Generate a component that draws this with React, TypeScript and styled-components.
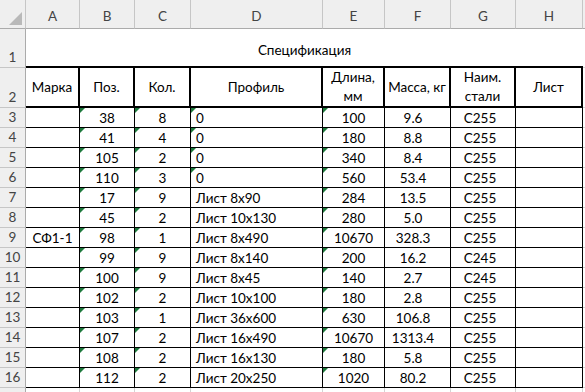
import styled, { createGlobalStyle, css } from 'styled-components'

const GlobalStyle = createGlobalStyle`
  html, body {
    margin: 0;
    padding: 0;
    background: #fff;
    overflow: hidden;
  }
`

const GRID_LINE = '#d4d4d4'
const HEAD_BG = '#efefef'
const HEAD_LINE = '#c6c6c6'

const Sheet = styled.div`
  display: grid;
  grid-template-columns: 26px 54px 55px 56px 132px 62px 66px 65px 67px 80px;
  grid-template-rows: 29px 39px 40px repeat(15, 20px);
  font-family: Lato, 'Liberation Sans', sans-serif;
  font-size: 13.5px;
  color: #000;
  width: 585px;
  height: 392px;
  overflow: hidden;
`

const Corner = styled.div`
  position: relative;
  background: ${HEAD_BG};
  border-right: 1px solid ${HEAD_LINE};
  border-bottom: 1px solid #ababab;
  box-sizing: border-box;

  &::after {
    content: '';
    position: absolute;
    right: 3px;
    bottom: 3px;
    width: 0;
    height: 0;
    border-left: 13px solid transparent;
    border-bottom: 13px solid #b9b9b9;
  }
`

const ColHead = styled.div`
  display: flex;
  align-items: flex-end;
  justify-content: center;
  padding-bottom: 4px;
  box-sizing: border-box;
  background: ${HEAD_BG};
  border-right: 1px solid ${HEAD_LINE};
  border-bottom: 1px solid #ababab;
  color: #444;
`

const RowHead = styled.div`
  display: flex;
  align-items: flex-end;
  justify-content: center;
  padding-bottom: 2px;
  box-sizing: border-box;
  background: ${HEAD_BG};
  border-right: 1px solid #ababab;
  border-bottom: 1px solid ${HEAD_LINE};
  color: #444;
`

const Title = styled.div`
  grid-column: 2 / 10;
  display: flex;
  align-items: center;
  justify-content: center;
  padding-top: 4px;
  box-sizing: border-box;
  border-bottom: 2px solid #000;
`

const Blank = styled.div`
  box-sizing: border-box;
  border-right: 1px solid ${GRID_LINE};
  border-bottom: 1px solid ${GRID_LINE};
`

const HeadCell = styled.div`
  display: flex;
  align-items: center;
  justify-content: center;
  text-align: center;
  line-height: 19px;
  box-sizing: border-box;
  border-right: 2px solid #000;
  border-bottom: 2px solid #000;
  white-space: pre-line;
`

const HeadText = styled.div`
  display: block;
`

const Cell = styled.div<{ $left?: boolean; $flag?: boolean; $shift?: number }>`
  position: relative;
  display: flex;
  align-items: center;
  justify-content: ${p => (p.$left ? 'flex-start' : 'center')};
  padding: 1px ${p => p.$shift ?? 0}px 0 ${p => (p.$left ? 5 : 0)}px;
  box-sizing: border-box;
  border-right: 1px solid #000;
  border-bottom: 1px solid #000;
  white-space: nowrap;

  ${p =>
    p.$flag &&
    css`
      &::before {
        content: '';
        position: absolute;
        top: 0;
        left: 0;
        border-top: 5px solid #1d7a3c;
        border-right: 5px solid transparent;
      }
    `}
`

const columns = ['A', 'B', 'C', 'D', 'E', 'F', 'G', 'H', '']

type Row = [string, string, string, string, string, string, string]

const rows: Row[] = [
  ['', '38', '8', '0', '100', '9.6', 'С255'],
  ['', '41', '4', '0', '180', '8.8', 'С255'],
  ['', '105', '2', '0', '340', '8.4', 'С255'],
  ['', '110', '3', '0', '560', '53.4', 'С255'],
  ['', '17', '9', 'Лист 8x90', '284', '13.5', 'С255'],
  ['', '45', '2', 'Лист 10x130', '280', '5.0', 'С255'],
  ['СФ1-1', '98', '1', 'Лист 8x490', '10670', '328.3', 'С255'],
  ['', '99', '9', 'Лист 8x140', '200', '16.2', 'С245'],
  ['', '100', '9', 'Лист 8x45', '140', '2.7', 'С245'],
  ['', '102', '2', 'Лист 10x100', '180', '2.8', 'С255'],
  ['', '103', '1', 'Лист 36x600', '630', '106.8', 'С255'],
  ['', '107', '2', 'Лист 16x490', '10670', '1313.4', 'С255'],
  ['', '108', '2', 'Лист 16x130', '180', '5.8', 'С255'],
  ['', '112', '2', 'Лист 20x250', '1020', '80.2', 'С255'],
]

const headers = ['Марка', 'Поз.', 'Кол.', 'Профиль', 'Длина,\nмм', 'Масса, кг', 'Наим.\nстали', 'Лист']

export default function App() {
  return (
    <>
      <GlobalStyle />
      <Sheet>
        <Corner />
        {columns.map((c, i) => (
          <ColHead key={i}>{c}</ColHead>
        ))}

        <RowHead>1</RowHead>
        <Title>Спецификация</Title>
        <Blank />

        <RowHead>2</RowHead>
        {headers.map((h, i) => (
          <HeadCell key={i}>
            <HeadText>{h}</HeadText>
          </HeadCell>
        ))}
        <Blank />

        {rows.map((r, i) => (
          <Row key={i} n={i + 3} row={r} zeroProfile={i < 4} />
        ))}

        <RowHead />
        {columns.map((_, i) => (
          <Blank key={i} />
        ))}
      </Sheet>
    </>
  )
}

function Row({ n, row, zeroProfile }: { n: number; row: Row; zeroProfile: boolean }) {
  const [mark, pos, qty, profile, length, mass, steel] = row
  return (
    <>
      <RowHead>{n}</RowHead>
      <Cell>{mark}</Cell>
      <Cell $flag>{pos}</Cell>
      <Cell $flag>{qty}</Cell>
      <Cell $left $flag={zeroProfile}>
        {profile}
      </Cell>
      <Cell $flag>{length}</Cell>
      <Cell $shift={9}>{mass}</Cell>
      <Cell $shift={6}>{steel}</Cell>
      <Cell />
      <Blank />
    </>
  )
}
